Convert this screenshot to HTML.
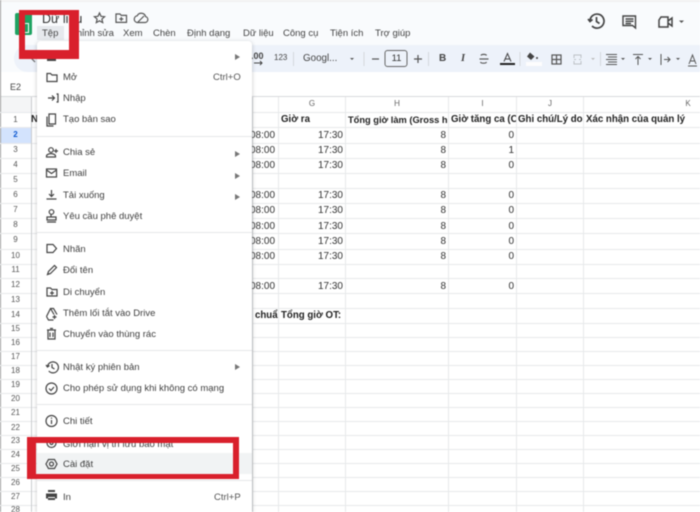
<!DOCTYPE html>
<html lang="vi">
<head>
<meta charset="utf-8">
<title>Tệp</title>
<style>
html,body{margin:0;padding:0;background:#fff}
#p{position:relative;width:700px;height:512px;overflow:hidden;background:#fff;font-family:"Liberation Sans","Noto Sans CJK SC",sans-serif;filter:blur(.45px)}
#p div,#p span.a{position:absolute;white-space:nowrap}
.l{background:#e7e9eb}
.h{height:1px;left:0;width:700px}
.v{width:1px;top:97px;height:415px}
.rn{left:0;width:31px;text-align:center;font-size:8px;color:#555;line-height:12px;height:12px}
.ch{top:99px;font-size:8px;color:#666;text-align:center;line-height:10px}
.t{font-size:10px;line-height:14px;color:#333;height:14px;margin-top:1px}
.b{font-weight:bold;color:#222;font-size:9.7px;margin-top:0}
.r{text-align:right}
.mi{left:63px;font-size:9.5px;line-height:14px;height:14px;color:#3f3f3f;margin-top:1px}
.mn{font-size:9.5px;line-height:14px;color:#444;top:27px}
.ar{left:235px;width:0;height:0;margin-top:2px;border-left:5px solid #777;border-top:3px solid transparent;border-bottom:3px solid transparent}
.sep{left:37px;width:215px;height:1px;background:#e6e7e8}
.red{background:#d9202c}
svg{position:absolute;overflow:visible}
.ic{fill:none;stroke:#444;stroke-width:1.2}
.tb{fill:none;stroke:#555;stroke-width:1.2}
</style>
</head>
<body>
<div id="p">
<!-- top chrome -->
<div style="left:0;top:0;width:700px;height:2px;background:#f1f1f1"></div>
<div style="left:0;top:2px;width:700px;height:70px;background:#f9fbfd"></div>
<div style="left:14px;top:45px;width:686px;height:27px;border-radius:14px 0 0 14px;background:#edf2fa"></div>
<div style="left:0;top:72px;width:700px;height:25px;background:#fff"></div>
<div style="left:0;top:96px;width:700px;height:1px;background:#d8dadc"></div>
<div style="left:0;top:0;width:1px;height:512px;background:#9a9a9a"></div>

<!-- logo -->
<div style="left:15px;top:13px;width:17px;height:22px;background:#1ea362;border-radius:2px"></div>
<div style="left:23px;top:23px;width:6px;height:10px;border:1.5px solid #fff;box-sizing:border-box"></div>

<div style="left:42px;top:11px;font-size:12.5px;line-height:16px;color:#333">Dữ liệu</div>
<div style="left:37px;top:26px;width:27px;height:14px;background:#e6e9ed"></div>
<div class="mn" style="left:42px">Tệp</div>
<div class="mn" style="left:70px">Chỉnh sửa</div>
<div class="mn" style="left:123px">Xem</div>
<div class="mn" style="left:153px">Chèn</div>
<div class="mn" style="left:187px">Định dạng</div>
<div class="mn" style="left:243px">Dữ liệu</div>
<div class="mn" style="left:283px">Công cụ</div>
<div class="mn" style="left:330px">Tiện ích</div>
<div class="mn" style="left:375px">Trợ giúp</div>

<svg style="left:0;top:0" width="700" height="97">
 <path class="tb" d="M99.500 13l1.500 3.300 3.600.4-2.700 2.400.8 3.500-3.200-1.800-3.200 1.800.8-3.500-2.700-2.400 3.600-.4z"/>
 <path class="tb" d="M116 14h4l1.200 1.400h5.300v7h-10.500z M121.300 17v4 M119.300 19h4"/>
 <path class="tb" d="M137 22.500h8a3 3 0 0 0 .6-5.900 4.500 4.500 0 0 0-8.400-.8 3.400 3.400 0 0 0-.2 6.700z M138 22l6-6"/>
 <!-- history -->
 <path d="M590 21a7 7 0 1 1 2 5M588 19l2 2.500 2.500-2M596.500 17v4.500l3 2" fill="none" stroke="#444" stroke-width="1.700"/>
 <!-- comment -->
 <path d="M623 16h12.500v12l-3-2.500h-9.500z M625.500 19h8M625.500 21.300h8M625.500 23.500h5.500" fill="none" stroke="#444" stroke-width="1.400"/>
 <!-- camera -->
 <path d="M659 20l2-3h7v10h-9z M668 21l4-3v8l-4-3" fill="none" stroke="#444" stroke-width="1.500"/>
 <path d="M679 20.500h5l-2.500 2.500z" fill="#555"/>
 <!-- toolbar -->
 <path d="M29 56l6 6" stroke="#666" stroke-width="1.200" fill="none"/>
 <path d="M254 63h8M260 61l2 2-2 2" stroke="#444" fill="none"/>
 <path d="M350 58h4l-2 2z" fill="#555"/>
 <rect x="385" y="50.500" width="22" height="16" rx="2.500" fill="none" stroke="#666"/>
 <path d="M372 59h7" stroke="#555" stroke-width="1.200"/>
 <path d="M414 59h8M418 55v8" stroke="#555" stroke-width="1.200"/>
 <path d="M364 52v14M428.500 52v14M520 52v14M600.500 52v14M293.500 52v14" stroke="#d4d8dd"/>
 <path d="M479.500 59h9" class="tb"/>
 <path d="M481 55.500c.5-1.500 5-1.500 5.500 0M486.500 62c-.5 1.600-5.500 1.600-6 0" class="tb"/>
 <path d="M500 64h15" stroke="#222" stroke-width="2"/>
 <path d="M504 61.500l3.500-8 3.500 8M505 59h5" fill="none" stroke="#444"/>
 <rect x="526" y="62" width="16" height="4" fill="#fdfdfd"/>
 <path d="M530 52.500l4.500 4-3.500 3.500-4-3.500z" fill="#444"/><circle cx="537" cy="58" r="1" fill="#444"/>
 <rect x="552" y="55" width="9" height="9" class="tb"/><path d="M552 59.500h9M556.500 55v9" class="tb"/>
 <path d="M574 58v-3h7v3M574 61v3h7v-3M574 59.500h2M579 59.500h2" fill="none" stroke="#bdc1c6"/>
 <path d="M591 58h4l-2 2z" fill="#bbb"/>
 <path d="M606 54.500h11M608 57h9M606 59.500h11M608 62h9M606 64.500h11" stroke="#555"/>
 <path d="M621 58h4l-2 2z M648 58h4l-2 2z M676 58h4l-2 2z" fill="#555"/>
 <path d="M633 54.500h10M638 65v-8M635.500 59l2.500-2.500 2.500 2.500" fill="none" stroke="#555"/>
 <path d="M661 54v11M664 59.500h6M667.500 57l2.500 2.500-2.500 2.500" fill="none" stroke="#555"/>
 <path d="M689 64l3.500-9 3.500 9M690 61h5M688 66h9" fill="none" stroke="#555"/>
</svg>
<div style="left:274px;top:52px;font-size:8px;line-height:12px;color:#444">123</div>
<div style="left:251px;top:50px;font-size:9px;line-height:12px;font-weight:bold;color:#444">.00</div>
<div style="left:303px;top:52px;font-size:9.800px;line-height:14px;color:#444">Googl...</div>
<div style="left:385px;top:52px;width:23px;text-align:center;font-size:9.500px;line-height:14px;color:#333">11</div>
<div style="left:439px;top:52px;font-size:10px;line-height:14px;font-weight:bold;color:#444">B</div>
<div style="left:461px;top:52px;font-size:10.500px;line-height:14px;font-style:italic;font-family:'Liberation Serif',serif;font-weight:bold;color:#444">I</div>
<div style="left:10px;top:81px;font-size:9px;line-height:12px;color:#444">E2</div>

<!-- grid -->
<div class="l h" style="top:112px"></div><div class="l h" style="top:127px"></div><div class="l h" style="top:143px"></div><div class="l h" style="top:158px"></div><div class="l h" style="top:173px"></div><div class="l h" style="top:188px"></div><div class="l h" style="top:203px"></div><div class="l h" style="top:218px"></div><div class="l h" style="top:233px"></div><div class="l h" style="top:249px"></div><div class="l h" style="top:264px"></div><div class="l h" style="top:278px"></div><div class="l h" style="top:293px"></div><div class="l h" style="top:308px"></div><div class="l h" style="top:323px"></div><div class="l h" style="top:337px"></div><div class="l h" style="top:351px"></div><div class="l h" style="top:365px"></div><div class="l h" style="top:379px"></div><div class="l h" style="top:393px"></div><div class="l h" style="top:407px"></div><div class="l h" style="top:421px"></div><div class="l h" style="top:435px"></div><div class="l h" style="top:449px"></div><div class="l h" style="top:463px"></div><div class="l h" style="top:477px"></div><div class="l h" style="top:491px"></div><div class="l h" style="top:505px"></div>
<div class="l v" style="left:31px;background:#c9cbce"></div>
<div class="l v" style="left:252px;background:#cfd1d3"></div><div class="l v" style="left:278px"></div><div class="l v" style="left:345px"></div><div class="l v" style="left:448px"></div><div class="l v" style="left:516px"></div><div class="l v" style="left:583px"></div>
<div style="left:1px;top:97px;width:30px;height:15px;background:#f4f5f6"></div>
<div style="left:1px;top:128px;width:30px;height:15px;background:#d3e3fd"></div>

<div class="ch" style="left:278px;width:68px">G</div>
<div class="ch" style="left:346px;width:102px">H</div>
<div class="ch" style="left:449px;width:67px">I</div>
<div class="ch" style="left:517px;width:66px">J</div>
<div class="ch" style="left:584px;width:208px">K</div>

<div class="rn" style="top:114px">1</div><div class="rn" style="top:129px;font-weight:bold;color:#0b57d0">2</div><div class="rn" style="top:144px">3</div><div class="rn" style="top:159px">4</div><div class="rn" style="top:174px">5</div><div class="rn" style="top:189px">6</div><div class="rn" style="top:204px">7</div><div class="rn" style="top:219px">8</div><div class="rn" style="top:234px">9</div><div class="rn" style="top:250px">10</div><div class="rn" style="top:264px">11</div><div class="rn" style="top:279px">12</div><div class="rn" style="top:294px">13</div><div class="rn" style="top:309px">14</div><div class="rn" style="top:323px">15</div><div class="rn" style="top:337px">16</div><div class="rn" style="top:351px">17</div><div class="rn" style="top:365px">18</div><div class="rn" style="top:379px">19</div><div class="rn" style="top:393px">20</div><div class="rn" style="top:407px">21</div><div class="rn" style="top:422px">22</div><div class="rn" style="top:435px">23</div><div class="rn" style="top:449px">24</div><div class="rn" style="top:463px">25</div><div class="rn" style="top:477px">26</div><div class="rn" style="top:491px">27</div><div class="rn" style="top:504px">28</div>

<div class="t b" style="left:281px;top:113px">Giờ ra</div>
<div class="t b" style="left:348px;top:113px;width:100px;overflow:hidden;font-size:9.3px">Tổng giờ làm (Gross h</div>
<div class="t b" style="left:451px;top:113px;width:65px;overflow:hidden">Giờ tăng ca (C</div>
<div class="t b" style="left:518px;top:113px;width:65px;overflow:hidden">Ghi chú/Lý do</div>
<div class="t b" style="left:586px;top:113px">Xác nhận của quản lý</div>

<div class="t" style="left:252px;top:128px;width:26px;overflow:hidden"><span style="margin-left:-2px">08:00</span></div><div class="t r" style="left:280px;top:128px;width:63px">17:30</div><div class="t r" style="left:350px;top:128px;width:96px">8</div><div class="t r" style="left:450px;top:128px;width:64px">0</div>
<div class="t" style="left:252px;top:143px;width:26px;overflow:hidden"><span style="margin-left:-2px">08:00</span></div><div class="t r" style="left:280px;top:143px;width:63px">17:30</div><div class="t r" style="left:350px;top:143px;width:96px">8</div><div class="t r" style="left:450px;top:143px;width:64px">1</div>
<div class="t" style="left:252px;top:158px;width:26px;overflow:hidden"><span style="margin-left:-2px">08:00</span></div><div class="t r" style="left:280px;top:158px;width:63px">17:30</div><div class="t r" style="left:350px;top:158px;width:96px">8</div><div class="t r" style="left:450px;top:158px;width:64px">0</div>
<div class="t" style="left:252px;top:188px;width:26px;overflow:hidden"><span style="margin-left:-2px">08:00</span></div><div class="t r" style="left:280px;top:188px;width:63px">17:30</div><div class="t r" style="left:350px;top:188px;width:96px">8</div><div class="t r" style="left:450px;top:188px;width:64px">0</div>
<div class="t" style="left:252px;top:203px;width:26px;overflow:hidden"><span style="margin-left:-2px">08:00</span></div><div class="t r" style="left:280px;top:203px;width:63px">17:30</div><div class="t r" style="left:350px;top:203px;width:96px">8</div><div class="t r" style="left:450px;top:203px;width:64px">0</div>
<div class="t" style="left:252px;top:219px;width:26px;overflow:hidden"><span style="margin-left:-2px">08:00</span></div><div class="t r" style="left:280px;top:219px;width:63px">17:30</div><div class="t r" style="left:350px;top:219px;width:96px">8</div><div class="t r" style="left:450px;top:219px;width:64px">0</div>
<div class="t" style="left:252px;top:234px;width:26px;overflow:hidden"><span style="margin-left:-2px">08:00</span></div><div class="t r" style="left:280px;top:234px;width:63px">17:30</div><div class="t r" style="left:350px;top:234px;width:96px">8</div><div class="t r" style="left:450px;top:234px;width:64px">0</div>
<div class="t" style="left:252px;top:249px;width:26px;overflow:hidden"><span style="margin-left:-2px">08:00</span></div><div class="t r" style="left:280px;top:249px;width:63px">17:30</div><div class="t r" style="left:350px;top:249px;width:96px">8</div><div class="t r" style="left:450px;top:249px;width:64px">0</div>
<div class="t" style="left:252px;top:279px;width:26px;overflow:hidden"><span style="margin-left:-2px">08:00</span></div><div class="t r" style="left:280px;top:279px;width:63px">17:30</div><div class="t r" style="left:350px;top:279px;width:96px">8</div><div class="t r" style="left:450px;top:279px;width:64px">0</div>
<div class="t b" style="left:255px;top:309px;width:23px;overflow:hidden">chuẩ</div>
<div class="t b" style="left:281px;top:309px">Tổng giờ OT:</div>
<div class="t b" style="left:31px;top:113px">N</div>

<!-- file menu -->
<div style="left:37px;top:41px;width:215px;height:480px;background:#fff;border-radius:4px;box-shadow:0 1px 4px rgba(60,64,67,.3)"></div>

<div class="ar" style="top:52px"></div><div class="mi" style="top:49px">Mới</div>
<div class="mi" style="top:70px">Mở</div><div class="mi" style="left:213px;top:70px;color:#555">Ctrl+O</div>
<div class="mi" style="top:91px">Nhập</div>
<div class="mi" style="top:112px">Tạo bản sao</div>
<div class="sep" style="top:136px"></div>
<div class="ar" style="top:149px"></div><div class="mi" style="top:145px">Chia sẻ</div>
<div class="ar" style="top:171px"></div><div class="mi" style="top:166px">Email</div>
<div class="ar" style="top:192px"></div><div class="mi" style="top:188px">Tải xuống</div>
<div class="mi" style="top:209px">Yêu cầu phê duyệt</div>
<div class="sep" style="top:232px"></div>
<div class="mi" style="top:242px">Nhãn</div>
<div class="mi" style="top:263px">Đổi tên</div>
<div class="mi" style="top:285px">Di chuyển</div>
<div class="mi" style="top:306px">Thêm lối tắt vào Drive</div>
<div class="mi" style="top:327px">Chuyển vào thùng rác</div>
<div class="sep" style="top:350px"></div>
<div class="ar" style="top:362px"></div><div class="mi" style="top:360px">Nhật ký phiên bản</div>
<div class="mi" style="top:381px">Cho phép sử dụng khi không có mạng</div>
<div class="sep" style="top:404px"></div>
<div class="mi" style="top:414px">Chi tiết</div>
<div class="mi" style="top:437px">Giới hạn vị trí lưu bảo mật</div>
<div style="left:37px;top:453px;width:215px;height:21px;background:#f1f3f4"></div>
<div class="mi" style="top:457px">Cài đặt</div>
<div class="sep" style="top:480px"></div>
<div class="mi" style="top:490px">In</div><div class="mi" style="left:214px;top:490px;color:#555">Ctrl+P</div>

<svg style="left:0;top:0" width="700" height="512">
 <rect x="47" y="52" width="9" height="9" fill="#444"/>
 <path class="ic" d="M47 73.500h3.500l1.500 1.500h5v6.500h-10z"/>
 <path class="ic" d="M48 98h6M52 95.500l2.500 2.500-2.500 2.500M56.500 94h1.500v8h-1.500"/>
 <path class="ic" d="M49 114h6.500v10h-6.500z M47 116.500v9.500h6.500"/>
 <circle class="ic" cx="51" cy="150" r="2.300"/><path class="ic" d="M46.500 157v-1c0-1.600 3-2.400 4.500-2.400s4.500.8 4.500 2.400v1z M54 151h4M56 149v4"/>
 <rect class="ic" x="46.500" y="169" width="10" height="8"/><path class="ic" d="M46.500 170l5 3.500 5-3.500"/>
 <path class="ic" d="M51.500 190v6M49 194l2.500 2.500 2.500-2.500M46.500 199h10"/>
 <circle class="ic" cx="51.500" cy="212" r="2.300"/><path class="ic" d="M51 214.500v2M47 217h9v3h-9z M47 222h9"/>
 <path class="ic" d="M47 244.500h6l3.500 4-3.500 4h-6z"/>
 <path class="ic" d="M47.500 274.500l1-3 6-6 2 2-6 6z"/>
 <path class="ic" d="M47 288h3.500l1.500 1.500h5v6.500h-10z M52 291v4M50 293h4" stroke="#444"/>
 <path class="ic" d="M46.500 316.500l4-8h3l3.500 6 M46.500 316.500l2 3.500h5 M50.500 308.500l3.500 6M54.500 315v4M52.500 317h4"/>
 <path class="ic" d="M48 330h7v9h-7z M47 330h9M50 328.500h3M50 332.500v4.500M53 332.500v4.500"/>
 <path class="ic" d="M47.500 366.500a5.500 5.500 0 1 1 1.300 4.500M46 365l1.500 2 2-1.500M52 364v3.500l2.500 1.500"/>
 <circle class="ic" cx="51.500" cy="388.500" r="5.500"/><path class="ic" d="M49 388.500l2 2 3-3.500"/>
 <circle class="ic" cx="51.500" cy="421" r="5.500"/><path class="ic" d="M51.500 420v4M51.500 417.500v1.200"/>
 <circle class="ic" cx="51.500" cy="443" r="4.500"/><circle class="ic" cx="51.500" cy="443" r="1.500"/>
 <path class="ic" d="M48.500 459.500h6l2.500 4.500-2.500 4.500h-6l-2.500-4.500z"/><circle class="ic" cx="51.500" cy="464" r="2"/>
 <path d="M46 493.500h11v5h-2v-1.500h-7v1.500h-2z M48 490h7v2h-7z M48 498h7v2h-7z" fill="#444"/>
</svg>

<!-- red annotation boxes -->
<div class="red" style="left:19px;top:10px;width:60px;height:5px"></div>
<div class="red" style="left:19px;top:50px;width:60px;height:9px"></div>
<div class="red" style="left:19px;top:10px;width:6px;height:49px"></div>
<div class="red" style="left:69px;top:10px;width:10px;height:49px"></div>

<div class="red" style="left:27px;top:437px;width:212px;height:6px"></div>
<div class="red" style="left:27px;top:474px;width:212px;height:5px"></div>
<div class="red" style="left:27px;top:437px;width:9px;height:42px"></div>
<div class="red" style="left:233px;top:437px;width:6px;height:42px"></div>
</div>
</body>
</html>
